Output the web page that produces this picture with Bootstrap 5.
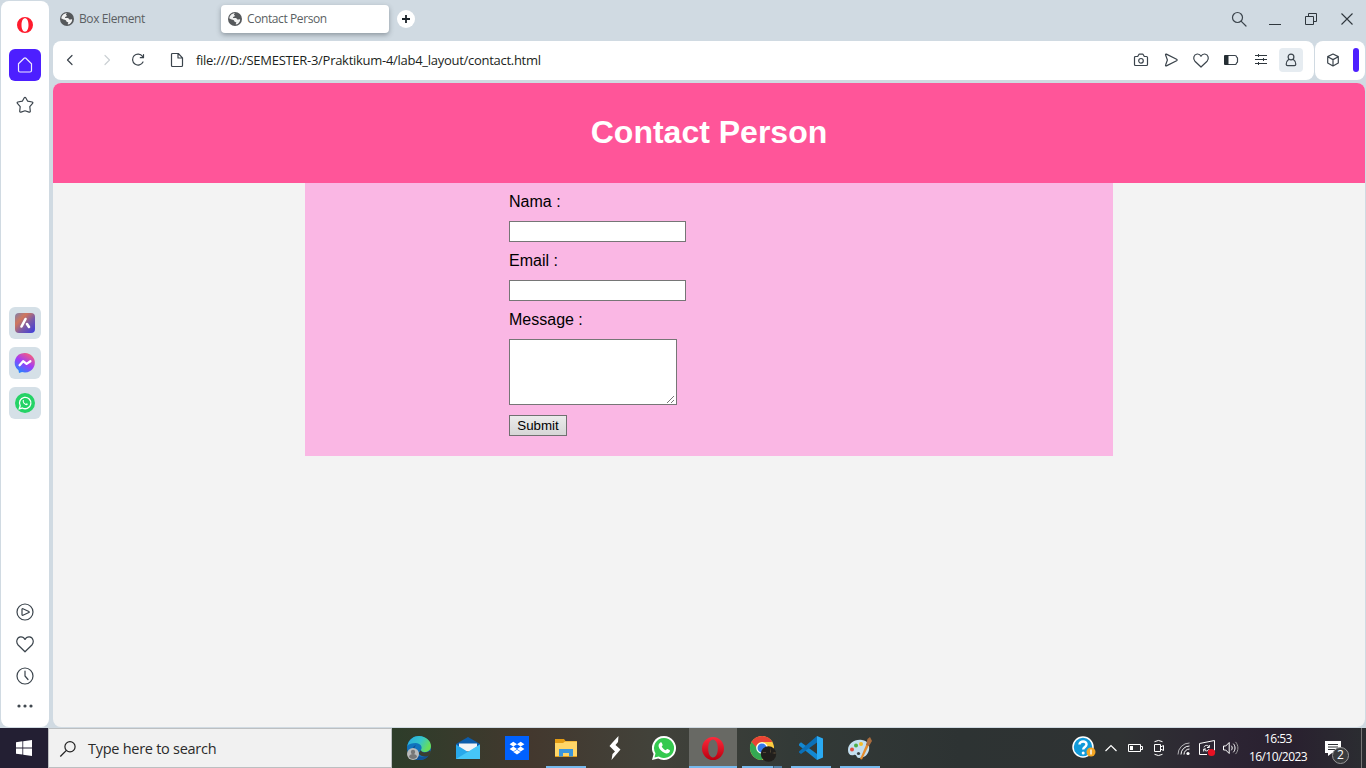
<!DOCTYPE html>
<html lang="en">
<head>
<meta charset="utf-8">
<meta name="viewport" content="width=device-width, initial-scale=1">
<title>Contact Person</title>
<link href="https://cdn.jsdelivr.net/npm/bootstrap@5.3.0/dist/css/bootstrap.min.css" rel="stylesheet">
<style>
body{height:768px;background:#d0dae2;font-family:"Open Sans","Noto Sans",sans-serif;line-height:1.2}
svg{display:block;flex:none;overflow:visible}
.ln{fill:none;stroke:#3b444c;stroke-width:1.2;stroke-linecap:round;stroke-linejoin:round}
.browser{height:728px;padding:1px 1px 1px 1px}
.side{width:48px;background:#fff;border-radius:8px;margin-right:4px;padding-top:8px;padding-bottom:19px}
.side-btn{width:32px;height:32px;border-radius:6px;margin-bottom:8px}
.side-btn.home{background:#4d1fff}
.side-btn.app{background:#d5e0e7}
.side-apps{margin-top:178px}
.side-foot{margin-right:1px}
.side-foot .cell{height:32px;width:32px}
.tabs{height:40px}
.tab-item{width:168px;height:28px;border-radius:4px;color:#5b5f63;font-size:12px;letter-spacing:-.4px;padding-left:7px;gap:5px}
.tab-item.on{background:#fff;box-shadow:0 2px 5px rgba(60,70,80,.45)}
.plus{width:18px;height:18px;background:#fff;margin-left:8px}
.win{width:36px;height:36px}
.tools{height:39px;margin-bottom:3px}
.addr{background:#fff;border-radius:8px;padding-right:8px;padding-bottom:1px}
.addr .cell{width:30px}
.nav-l{padding-left:13px}
.ic-fwd{margin-left:29px}
.ic-rel{margin-left:20px}
.ic-file{margin-left:25px;margin-right:8px}
.url{font-size:13px;color:#1c1f22;letter-spacing:-.28px;padding-top:2px}
.profile{width:24px;height:24px;border-radius:4px;background:#e6ecf1}
.ext{width:50px;background:#fff;border-radius:8px;margin-left:1px;padding:0 6px 1px 12px}
.accent{width:6px;height:24px;border-radius:3px;background:#4d1fff}
.page{background:#f3f3f3;border-radius:8px;font-family:"Liberation Sans",Arial,sans-serif;color:#000}
.page header{background:#ff5599;height:100px;color:#fff}
.page h1{font-size:32px;font-weight:700;margin:0 0 2px;line-height:38px}
.panel{width:808px;height:273px;background:#fab7e4;margin-left:252px;padding:10px 0 0 204px}
.panel label{font-size:16px;line-height:18px;height:18px;margin-bottom:10px;display:block}
.panel input{width:177px;height:21px;border:1px solid #767676;padding:1px 2px;margin-bottom:10px;display:block}
.panel textarea{width:168px;height:66px;border:1px solid #767676;display:block;margin-bottom:10px;resize:none}
.grip{right:2px;bottom:12px}
.panel button{width:58px;height:21px;border:1px solid #707070;border-radius:0;background:linear-gradient(#ebebeb,#d6d6d6);font-size:13.33px;line-height:15px;padding:0;display:block}
.task{height:40px;color:#fff;background:linear-gradient(90deg,#231f33 0,#231f33 48px,#2d3d2a 392px,#43382e 530px,#42423a 650px,#333a37 790px,#2d3333 960px,#2f3233 1120px,#2c2433 1230px,#29202f 1290px,#2b2d31 1366px)}
.start{width:48px}
.find{width:344px;height:40px;background:#f1f1f1;border:1px solid #bcbfc1;color:#2b2b2b;font-size:14.5px;letter-spacing:-.27px;padding-left:11px;gap:12px;padding-top:1px}
.pins{margin-left:2px}
.pin{width:49px;height:40px;border:0 solid transparent;border-width:0 4px 0 5px}
.pin.run{background:linear-gradient(#76b9ed,#76b9ed) bottom/100% 2px no-repeat padding-box}
.pin.multi{background-image:linear-gradient(90deg,#76b9ed 31px,#3b5b74 31px,#3b5b74 32px,#5483a8 32px)}
.pin.act{border-width:0;width:48px;margin-left:1px;background:linear-gradient(#76b9ed,#76b9ed) bottom/100% 2px no-repeat,#686964}
.tray .cell{width:24px}
.help{margin-right:3px}
.clock{width:66px;font-size:12px;letter-spacing:-.55px;line-height:18px;margin-left:2px}
.alerts{margin-left:14px;width:36px}
.count{left:7px;top:6px;width:17px;height:17px;background:#3a3c3e;border:1px solid #999;font-size:12px;line-height:14px}
.edge{width:1px;background:#777;margin-right:4px}
</style>
</head>
<body class="d-flex flex-column overflow-hidden">
<svg width="0" height="0" class="position-absolute">
<defs>
<linearGradient id="gArt" x1="0" y1="0" x2="1" y2="1"><stop offset="0" stop-color="#7d7fae"/><stop offset=".3" stop-color="#d0775c"/><stop offset=".6" stop-color="#7a5aa8"/><stop offset="1" stop-color="#3a3ce0"/></linearGradient>
<linearGradient id="gMsg" x1=".2" y1="1" x2=".8" y2="0"><stop offset="0" stop-color="#168eff"/><stop offset=".5" stop-color="#a03cf8"/><stop offset="1" stop-color="#ff6270"/></linearGradient>
<linearGradient id="gEdge" x1="0" y1="0" x2="1" y2=".4"><stop offset="0" stop-color="#27a9e4"/><stop offset=".6" stop-color="#36c6c8"/><stop offset="1" stop-color="#67de5a"/></linearGradient>
<linearGradient id="gOp" x1="0" y1="0" x2="0" y2="1"><stop offset="0" stop-color="#ff2a3c"/><stop offset="1" stop-color="#b9000f"/></linearGradient>
<symbol id="globe" viewBox="0 0 14 14"><circle cx="7" cy="7" r="7" fill="#55585b"/><path d="M7.200 1.300C5.900 1.900 5.700 3 6.500 3.300c.8.300.3 1.300-.8 1.500-1 .2-1 1.100-.2 1.200h2.400c1 .2.800 1.300 1.600 1.500 1.100.2 1.300-.4 2.600-.2.300 2.300-1.500 4.900-4.200 5.300-.6-.7.600-1.300.4-2-.2-.8-1.700-.6-2-1.400C6 8.300 5.700 8 4.700 7.800 3.300 7.500 2.500 6.800 1.300 6.400 1.500 3.400 4.200 1.100 7.200 1.300z" fill="#fff" opacity=".92"/></symbol>
<symbol id="heart" viewBox="0 0 18 18"><path class="ln" d="M9 16.800 2.100 10C-.3 7.300.6 2.200 4.700 1.800c2-.1 3.600 1.200 4.300 2.700.7-1.500 2.300-2.800 4.300-2.700 4.100.4 5 5.500 2.600 8.200z"/></symbol>
<symbol id="wa" viewBox="0 0 24 24"><path d="M12 0a12 12 0 0 0-10.400 18L0 24l6.200-1.500A12 12 0 1 0 12 0z" fill="#fff"/><path d="M12 2a10 10 0 0 0-8.500 15.200L2.500 21.500l4.300-1A10 10 0 1 0 12 2z" fill="#35c94f"/><path d="M8.400 6.500c.7-.5 1.200-.2 1.500.5l.7 1.700c.2.500-.1.900-.9 1.800 1 1.900 2.200 3 4.200 3.800.8-.9 1.100-1.400 1.600-1.200l2 1c.7.3.6 1.100.1 1.900-.7 1.100-2.100 1.700-3.400 1.400C10.300 16.500 7 13 6.600 10.200c-.2-1.500.7-2.900 1.800-3.700z" fill="#fff"/></symbol>
</defs>
</svg>

<div class="browser d-flex flex-shrink-0">
  <aside class="side d-flex flex-column align-items-center flex-shrink-0">
    <div class="side-btn d-flex align-items-center justify-content-center"><svg width="16" height="16" viewBox="0 0 16 16"><path fill="#ff1b2d" fill-rule="evenodd" d="M8 0a8 8 0 1 0 0 16A8 8 0 0 0 8 0zM8 1.300c2 0 3.500 2.700 3.500 6.700S10 14.700 8 14.700 4.500 12 4.500 8 6 1.300 8 1.300z"/></svg></div>
    <div class="side-btn home d-flex align-items-center justify-content-center"><svg width="16" height="16" viewBox="0 0 16 16"><path d="M1.500 6.700 7.100 1.200a1.300 1.300 0 0 1 1.800 0l5.600 5.500v6.800a1.500 1.500 0 0 1-1.500 1.500H3a1.500 1.500 0 0 1-1.500-1.500z" fill="none" stroke="#f0ebff" stroke-width="1.200"/></svg></div>
    <div class="side-btn d-flex align-items-center justify-content-center"><svg width="18" height="18" viewBox="0 0 18 18"><path class="ln" d="M8.300 1.700c.3-.5 1.100-.5 1.400 0l2 3.500 4.400.8c.8.200 1 .8.500 1.400l-2.800 3.300.5 4.500c0 .8-.6 1.200-1.300.9L9 14.800l-4 1.300c-.7.300-1.300-.1-1.300-.9l.5-4.500-2.800-3.300C.9 6.800 1.100 6.200 1.900 6l4.400-.8z"/></svg></div>
    <div class="side-apps">
      <div class="side-btn app d-flex align-items-center justify-content-center"><svg width="20" height="20" viewBox="0 0 20 20"><rect width="20" height="20" rx="4" fill="url(#gArt)"/><path d="M10.500 6 6.500 13.500M12 11l2 3" stroke="#fff" stroke-width="2.600" stroke-linecap="round"/></svg></div>
      <div class="side-btn app d-flex align-items-center justify-content-center"><svg width="20" height="20" viewBox="0 0 20 20"><path d="M10 0a10 9.700 0 1 1-3 19L4 20l-.5-2.700A10 9.700 0 0 1 10 0z" fill="url(#gMsg)"/><path d="m4.600 12.200 3.500-4 3.500 2.700 3.800-2.700" fill="none" stroke="#fff" stroke-width="2.300" stroke-linejoin="round" stroke-linecap="round"/></svg></div>
      <div class="side-btn app d-flex align-items-center justify-content-center"><svg width="20" height="20" viewBox="0 0 20 20"><circle cx="10" cy="10" r="10" fill="#25d366"/><path d="m4.300 15.800.9-3a5.700 5.700 0 1 1 2.200 2.200z" fill="none" stroke="#fff" stroke-width="1.300"/><path d="M7.900 7.100c.5-.4.800-.2 1 .5.2.6.100.8-.3 1.200.6 1.100 1.300 1.700 2.400 2.100.5-.7.7-.7 1.200-.4.700.3.800.5.500 1-1.500 2.100-6-1.500-4.800-4.400z" fill="#fff"/></svg></div>
    </div>
    <div class="side-foot mt-auto">
      <div class="cell d-flex align-items-center justify-content-center"><svg width="18" height="18" viewBox="0 0 18 18"><circle class="ln" cx="9" cy="9" r="8"/><path class="ln" d="M6 6.300c0-.5.400-.7.900-.5l6 2.700c.5.200.5.800 0 1l-6 2.700c-.5.200-.9 0-.9-.5z"/></svg></div>
      <div class="cell d-flex align-items-center justify-content-center"><svg width="18" height="18"><use href="#heart"/></svg></div>
      <div class="cell d-flex align-items-center justify-content-center"><svg width="18" height="18" viewBox="0 0 18 18"><circle class="ln" cx="9" cy="9" r="8"/><path class="ln" d="M9 4v5l3 3.500"/></svg></div>
      <div class="d-flex justify-content-center pt-2 mt-1"><svg width="16" height="4" viewBox="0 0 16 4" fill="#40484f"><circle cx="2" cy="2" r="1.600"/><circle cx="8" cy="2" r="1.600"/><circle cx="14" cy="2" r="1.600"/></svg></div>
    </div>
  </aside>

  <div class="d-flex flex-column flex-grow-1">
    <div class="tabs d-flex align-items-start">
      <div class="d-flex align-items-center mt-1">
        <div class="tab-item d-flex align-items-center"><svg width="14" height="14"><use href="#globe"/></svg><span>Box Element</span></div>
        <div class="tab-item on d-flex align-items-center"><svg width="14" height="14"><use href="#globe"/></svg><span>Contact Person</span></div>
        <div class="plus rounded-circle d-flex align-items-center justify-content-center"><svg width="8" height="8" viewBox="0 0 8 8"><path d="M4 0v8M0 4h8" stroke="#1b2329" stroke-width="1.800"/></svg></div>
      </div>
      <div class="d-flex ms-auto">
        <div class="win d-flex align-items-center justify-content-center"><svg width="16" height="16" viewBox="0 0 16 16"><circle class="ln" cx="6.500" cy="6.500" r="5"/><path class="ln" d="m10.300 10.300 4.700 4.700"/></svg></div>
        <div class="win d-flex align-items-center justify-content-center"><svg width="12" height="12" viewBox="0 0 12 12"><path d="M0 11.500h12" stroke="#2f373d"/></svg></div>
        <div class="win d-flex align-items-center justify-content-center"><svg width="12" height="12" viewBox="0 0 12 12"><path d="M.5 3.500h8v8h-8zM3.500 3.500v-3h8v8h-3" fill="none" stroke="#2f373d"/></svg></div>
        <div class="win d-flex align-items-center justify-content-center"><svg width="12" height="12" viewBox="0 0 12 12"><path d="m.5.500 11 11m0-11-11 11" stroke="#2f373d" stroke-width="1.100"/></svg></div>
      </div>
    </div>
    <div class="tools d-flex">
      <div class="addr d-flex align-items-center flex-grow-1">
        <div class="nav-l d-flex align-items-center">
          <svg width="8" height="12" viewBox="0 0 8 12"><path class="ln" d="M6 1.500 1.500 6 6 10.500"/></svg>
          <svg class="ic-fwd" width="8" height="12" viewBox="0 0 8 12"><path class="ln" style="stroke:#cbd0d4" d="M2 1.500 6.500 6 2 10.500"/></svg>
          <svg class="ic-rel" width="14" height="14" viewBox="0 0 14 14"><path class="ln" d="M12 9A5.500 5.500 0 1 1 11.500 3.300L12.500 4.500M12.500 1.500v3.200H9.300"/></svg>
          <svg class="ic-file" width="14" height="16" viewBox="0 0 14 16"><path class="ln" d="M2.500 1.500h5.800l4.200 4.300v7.700a1 1 0 0 1-1 1h-9a1 1 0 0 1-1-1v-11a1 1 0 0 1 1-1zM8 1.500V6h4.500"/></svg>
          <span class="url ps-1">file:///D:/SEMESTER-3/Praktikum-4/lab4_layout/contact.html</span>
        </div>
        <div class="d-flex align-items-center ms-auto">
          <div class="cell d-flex justify-content-center"><svg width="14" height="14" viewBox="0 0 14 14"><path class="ln" d="M1.500 3.500h2.200l1-1.800a1 1 0 0 1 .8-.5h3a1 1 0 0 1 .8.500l1 1.800h2.200a1 1 0 0 1 1 1v7a1 1 0 0 1-1 1h-11a1 1 0 0 1-1-1v-7a1 1 0 0 1 1-1z"/><circle class="ln" cx="7" cy="7.800" r="2.300"/></svg></div>
          <div class="cell d-flex justify-content-center"><svg width="14" height="14" viewBox="0 0 14 14"><path class="ln" d="M1.600 2c-.3-.7.200-1.200.8-.9l10.200 5.200c.7.400.7 1 0 1.400L2.400 12.900c-.6.300-1.100-.2-.8-.9L3.400 7z"/></svg></div>
          <div class="cell d-flex justify-content-center"><svg width="16" height="15" viewBox="0 0 16 15"><path class="ln" d="M8 14 1.900 8.200C-.3 5.700.6 1.400 4.200 1 6 .900 7.400 2 8 3.300 8.600 2 10 .900 11.800 1c3.600.4 4.500 4.700 2.300 7.200z"/></svg></div>
          <div class="cell d-flex justify-content-center"><svg width="14" height="10" viewBox="0 0 14 10"><path class="ln" d="M4 .500h7a1.500 1.500 0 0 1 1.500 1.500q1 .5 1 1.200v3.600q0 .7-1 1.200A1.500 1.500 0 0 1 11 9.500H4"/><path d="M1 0h3.500v10H1a1 1 0 0 1-1-1V1a1 1 0 0 1 1-1z" fill="#252d33"/></svg></div>
          <div class="cell d-flex justify-content-center"><svg width="12" height="12" viewBox="0 0 12 12"><path d="M0 1.500h12M0 5.500h12M0 9.500h12M3.500 0v3M8.500 4v3M3.500 8v3" stroke="#2f373d"/></svg></div>
          <div class="cell d-flex justify-content-center"><div class="profile d-flex align-items-center justify-content-center"><svg width="12" height="14" viewBox="0 0 12 14"><circle class="ln" cx="6" cy="4" r="2.900"/><path class="ln" d="M3.800 6.300C2.200 7.500 1.200 9.200 1.200 11.300c0 .8.500 1.400 1.400 1.400h6.800c.9 0 1.400-.6 1.400-1.400 0-2.100-1-3.800-2.600-5"/></svg></div></div>
        </div>
      </div>
      <div class="ext d-flex align-items-center justify-content-between flex-shrink-0"><svg width="12" height="14" viewBox="0 0 12 14"><path class="ln" d="m6 1 5.300 2.600v6.300L6 13 .7 9.900V3.600zM.7 3.700 6 6.600l5.300-2.900M6 6.600V13"/></svg><div class="accent"></div></div>
    </div>

    <main class="page flex-grow-1 overflow-hidden">
      <header class="d-flex align-items-center justify-content-center"><h1>Contact Person</h1></header>
      <form class="panel">
        <label for="nama">Nama :</label><input id="nama" type="text">
        <label for="email">Email :</label><input id="email" type="text">
        <label for="msg">Message :</label>
        <div class="position-relative d-inline-block align-top"><textarea id="msg"></textarea><svg class="grip position-absolute" width="8" height="8" viewBox="0 0 8 8"><path d="m0 8 7-7M4 8l3-3" stroke="#555" stroke-width=".8"/></svg></div>
        <button type="button">Submit</button>
      </form>
    </main>
  </div>
</div>

<footer class="task d-flex flex-shrink-0">
  <div class="start d-flex align-items-center justify-content-center"><svg width="16" height="16" viewBox="0 0 16 16" fill="#fff"><path d="M0 2.200 6.400 1.300v6.200H0zM7.200 1.200 16 0v7.500H7.200zM0 8.400h6.400v6.200L0 13.700zM7.200 8.400H16V16l-8.800-1.200z"/></svg></div>
  <div class="find d-flex align-items-center"><svg width="16" height="16" viewBox="0 0 16 16"><circle cx="10" cy="5.700" r="5.100" fill="none" stroke="#222" stroke-width="1.200"/><path d="M6.400 9.400.300 15.500" stroke="#222" stroke-width="1.300"/></svg><span>Type here to search</span></div>
  <div class="pins d-flex">
    <div class="pin d-flex align-items-center justify-content-center"><svg width="24" height="24" viewBox="0 0 24 24"><circle cx="12" cy="12" r="12" fill="#1173bd"/><path d="M.3 10C2 3 7-.1 12 0c7 .1 12 5 12 10 0 4-3.300 6-6.500 6-2.700 0-4-1.100-3.600-2 2.300-2.900-.9-6.900-5.100-6.900C5 7.100 2 8 .3 10z" fill="url(#gEdge)"/><path d="M9 9c-2.500 3-1.600 8 1.700 10.200 3 2 7 2 11.300.1C19.500 23.300 15 24.500 11 24 6.500 22.500 4.200 18 5 14c.5-2.500 2-4.500 4-5z" fill="#125296"/><path d="M14 14c0 1.500 2 2.800 5 2.300 2-.3 3.400-1 4-2l1 2-1.500 3.300c-4 1.600-9 1-11-2.400z" fill="#3b3e31"/><circle cx="6" cy="18" r="6" fill="#b9bbbc"/><circle cx="6" cy="16" r="2.200" fill="#777"/><path d="M2 21c0-4 8-4 8 0-2 2.500-6 2.500-8 0z" fill="#777"/></svg></div>
    <div class="pin d-flex align-items-center justify-content-center"><svg width="24" height="24" viewBox="0 0 24 24"><path d="M0 8 12 1l12 7v6H0z" fill="#0d5caa"/><path d="M3 7.500h18v8H3z" fill="#f3f3f5"/><path d="M0 8.500 12 16l12-7.500V23H0z" fill="#28a8ea"/><path d="M0 23 24 8.500V23z" fill="#50d0fb" opacity=".75"/></svg></div>
    <div class="pin d-flex align-items-center justify-content-center"><svg width="24" height="24" viewBox="0 0 24 24"><path d="M0 0h24v24H0z" fill="#0061fe"/><path d="m8.300 5.800 3.700 2.400-3.700 2.400-3.700-2.400zm7.400 0 3.700 2.400-3.700 2.400L12 8.200zM8.300 10.600 12 13l-3.700 2.400L4.600 13zm7.400 0 3.700 2.400-3.700 2.400L12 13zM12 13.700l3.700 2.400-3.700 2.400-3.700-2.400z" fill="#fff"/></svg></div>
    <div class="pin run d-flex align-items-center justify-content-center"><svg width="22" height="18" viewBox="0 0 22 18"><path d="M0 0h9l1.500 2H22v16H0z" fill="#e39b13"/><path d="M0 4h8l2-1.500h12V17H0z" fill="#ffd668"/><path d="M4 17.500V10h14v7.500h-4V14H8v3.500z" fill="#3a96dd"/></svg></div>
    <div class="pin d-flex align-items-center justify-content-center"><svg width="12" height="24" viewBox="0 0 12 24"><path d="M9.500 0 9 6 6.500 9 11.500 13.500 8.500 17 2.500 24l1-6L6 15.500.500 10 3.500 6.500z" fill="#fff"/></svg></div>
    <div class="pin d-flex align-items-center justify-content-center"><svg width="24" height="24"><use href="#wa"/></svg></div>
    <div class="pin act d-flex align-items-center justify-content-center"><svg width="22" height="23" viewBox="0 0 22 23"><path fill="url(#gOp)" fill-rule="evenodd" d="M11 0a11 11.500 0 1 0 0 23 11 11.500 0 0 0 0-23zm0 2.500c2.700 0 4.800 3.700 4.800 9s-2.100 9-4.800 9-4.800-3.700-4.800-9 2.100-9 4.800-9z"/></svg></div>
    <div class="pin run multi d-flex align-items-center justify-content-center"><svg width="24" height="24" viewBox="0 1 24 24"><circle cx="12" cy="13" r="12" fill="#ffcd40"/><path d="M1.600 7A12 12 0 0 1 22.400 7H12a6 6 0 0 0-5.200 9z" fill="#ea4335"/><path d="M1.600 7A12 12 0 0 0 12 25l5.200-9H12a6 6 0 0 1-5.200-3z" fill="#34a853"/><circle cx="12" cy="13" r="5.800" fill="#fff"/><circle cx="12" cy="13" r="4.500" fill="#3579e8"/><circle cx="18.500" cy="19" r="7.700" fill="#211f1c"/><path d="M13 17h3v1h-3zM20 12.500l1 4-1 2zM22 18l3.500-1v2z" fill="#67573d" opacity=".7"/></svg></div>
    <div class="pin run d-flex align-items-center justify-content-center"><svg width="24" height="24" viewBox="0 0 24 24"><path d="m0 8 2-1.700L18 18v6L0 9.500z" fill="#1388d2"/><path d="M0 15.500 18 0v6.500L2 18 0 16.500z" fill="#0b70b8"/><path d="m18 0 6 2.500v19L18 24z" fill="#2aaaf3"/></svg></div>
    <div class="pin run d-flex align-items-center justify-content-center"><svg width="24" height="24" viewBox="0 0 24 24"><path d="M0 14C0 8 6 3 14 4c6 1 8 5 7 10-1 5-5 8-10 8-3 0-2-4-5-3-4 1-6-1-6-5z" fill="#c3dfef"/><circle cx="4" cy="13.500" r="2" fill="#e24c3d"/><circle cx="8" cy="9.500" r="2" fill="#4cad47"/><circle cx="13" cy="8" r="2" fill="#f4bd29"/><circle cx="10.500" cy="17.500" r="1.600" fill="#3b4143"/><path d="M12 23 18.500 8l2.500 1-7 14.500z" fill="#e38b2c"/><path d="m18 9 1.500-6L22 1l2 4-3 5z" fill="#a96c3e"/></svg></div>
  </div>
  <div class="tray d-flex align-items-center ms-auto">
    <div class="cell help d-flex justify-content-center"><svg width="24" height="24" viewBox="0 0 24 24"><circle cx="11" cy="11" r="10" fill="#129ad9" stroke="#fff" stroke-width="1.500"/><path d="M7.500 8.500C7.500 4.500 14.800 4.700 14.500 8.500c-.2 2.400-3.300 2.500-3.300 5" fill="none" stroke="#fff" stroke-width="2.500"/><circle cx="11.200" cy="17" r="1.500" fill="#fff"/><circle cx="19" cy="16" r="4.500" fill="#f5a623"/><path d="M19 13.500v5" stroke="#fff" stroke-width="1.400"/></svg></div>
    <div class="cell d-flex justify-content-center"><svg width="12" height="8" viewBox="0 0 12 8"><path d="m.5 7 5.500-5.500L11.500 7" fill="none" stroke="#fff" stroke-width="1.200"/></svg></div>
    <div class="cell d-flex justify-content-center"><svg width="15" height="10" viewBox="0 0 15 10"><path d="M.5 1.500h12v7H.500zM12.500 3.500h2v3h-2" fill="none" stroke="#fff"/><path d="M2 3h3v4H2z" fill="#fff"/></svg></div>
    <div class="cell d-flex justify-content-center"><svg width="12" height="16" viewBox="0 0 12 16"><path d="M1.500 4.500h6v7h-6zM7.500 7l3-1.500v5l-3-1.500M1.500 1.700Q5.500-.800 9.500 1.700M1.500 14.300q4 2.500 8 0" fill="none" stroke="#fff"/></svg></div>
    <div class="cell d-flex justify-content-center"><svg width="13" height="13" viewBox="0 0 13 13"><g fill="none" stroke="#fff"><path d="M1 12.500A11.500 11.500 0 0 1 12.500 1" opacity=".65"/><path d="M4 12.500A8.500 8.500 0 0 1 12.500 4M7 12.500A5.500 5.500 0 0 1 12.500 7"/></g><circle cx="11" cy="11.500" r="1.600" fill="#fff"/></svg></div>
    <div class="cell d-flex justify-content-center"><svg width="16" height="16" viewBox="0 0 16 16"><path d="M.5 3.500 15.500.500v10M.5 3.500v11H8M5 7.300c.7-2.500 4.300-2.500 5 0M10.300 5v2.500H8M10 9c-.7 2.500-4.300 2.500-5 0M4.700 11.500V9H7" fill="none" stroke="#fff"/><circle cx="12.500" cy="12.500" r="3.600" fill="#e81123"/></svg></div>
    <div class="cell d-flex justify-content-center"><svg width="16" height="14" viewBox="0 0 16 14"><path d="M.5 5h2.200l3.500-3.500v11L2.700 9H.5zM8.300 4.700c1.200 1.300 1.200 3.300 0 4.600M10.300 2.700c2.300 2.500 2.300 6.100 0 8.600" fill="none" stroke="#fff"/><path d="M12.500.900c3.200 3.500 3.200 8.700 0 12.200" fill="none" stroke="#999"/></svg></div>
    <div class="clock text-center">16:53<br>16/10/2023</div>
    <div class="alerts position-relative"><svg width="16" height="15" viewBox="0 0 16 15"><path d="M0 0h16v12H7l-4 3v-3H0z" fill="#fff"/><path d="M3 3.500h10M3 6h10M3 8.500h7" stroke="#2d2f33"/></svg><span class="count position-absolute rounded-circle text-center">2</span></div>
    <div class="edge align-self-stretch"></div>
  </div>
</footer>
<script src="https://cdn.jsdelivr.net/npm/bootstrap@5.3.0/dist/js/bootstrap.bundle.min.js"></script>
</body>
</html>
